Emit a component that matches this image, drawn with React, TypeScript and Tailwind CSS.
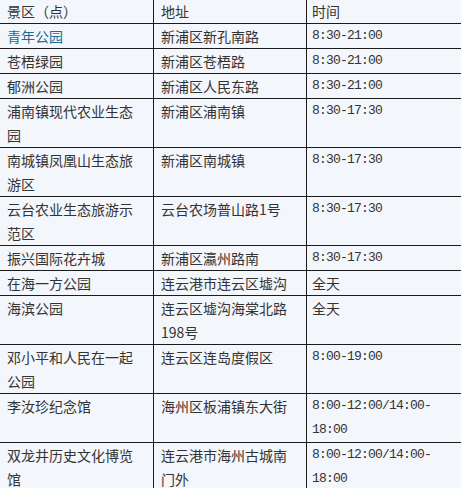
import React from 'react';

interface Spot {
  name: string;
  address: string;
  hours: string;
  link?: boolean;
}

const spots: Spot[] = [
  { name: '青年公园', address: '新浦区新孔南路', hours: '8:30-21:00', link: true },
  { name: '苍梧绿园', address: '新浦区苍梧路', hours: '8:30-21:00' },
  { name: '郁洲公园', address: '新浦区人民东路', hours: '8:30-21:00' },
  { name: '浦南镇现代农业生态园', address: '新浦区浦南镇', hours: '8:30-17:30' },
  { name: '南城镇凤凰山生态旅游区', address: '新浦区南城镇', hours: '8:30-17:30' },
  { name: '云台农业生态旅游示范区', address: '云台农场普山路1号', hours: '8:30-17:30' },
  { name: '振兴国际花卉城', address: '新浦区瀛州路南', hours: '8:30-17:30' },
  { name: '在海一方公园', address: '连云港市连云区墟沟', hours: '全天' },
  { name: '海滨公园', address: '连云区墟沟海棠北路198号', hours: '全天' },
  { name: '邓小平和人民在一起公园', address: '连云区连岛度假区', hours: '8:00-19:00' },
  { name: '李汝珍纪念馆', address: '海州区板浦镇东大街', hours: '8:00-12:00/14:00-\u200B18:00' },
  { name: '双龙井历史文化博览馆', address: '连云港市海州古城南门外', hours: '8:00-12:00/14:00-\u200B18:00' },
];

const cjk = "font-['Noto_Sans_CJK_SC',sans-serif] text-[14px]";
const mono = "font-['Liberation_Mono',monospace] text-[13px] tracking-[-0.8px]";
const cell = 'border-r border-b border-[#1c1c1c] leading-[24px] text-[#333]';

export default function App() {
  return (
    <div className="w-[461px] h-[488px] overflow-hidden bg-[#f3f6fb]">
      <div className="-mt-px grid grid-cols-[154px_153px_160px]">
        <div className={`${cell} ${cjk} pl-[7px] pr-2`}>景区（点）</div>
        <div className={`${cell} ${cjk} pl-[7px] pr-2`}>地址</div>
        <div className={`${cell} ${cjk} pl-[5px] pr-2`}>时间</div>

        {spots.map((s, i) => (
          <React.Fragment key={i}>
            <div className={`${cell} ${cjk} pl-[7px] pr-2`}>
              {s.link ? (
                <span className="text-[#1b6d96]">{s.name}</span>
              ) : (
                s.name
              )}
            </div>
            <div className={`${cell} ${cjk} pl-[7px] pr-2`}>{s.address}</div>
            {/* times use a narrow monospace face, plain words stay in CJK */}
            <div className={`${cell} ${/\d/.test(s.hours) ? mono : cjk} pl-[5px] pr-2`}>
              {s.hours}
            </div>
          </React.Fragment>
        ))}
      </div>
    </div>
  );
}
